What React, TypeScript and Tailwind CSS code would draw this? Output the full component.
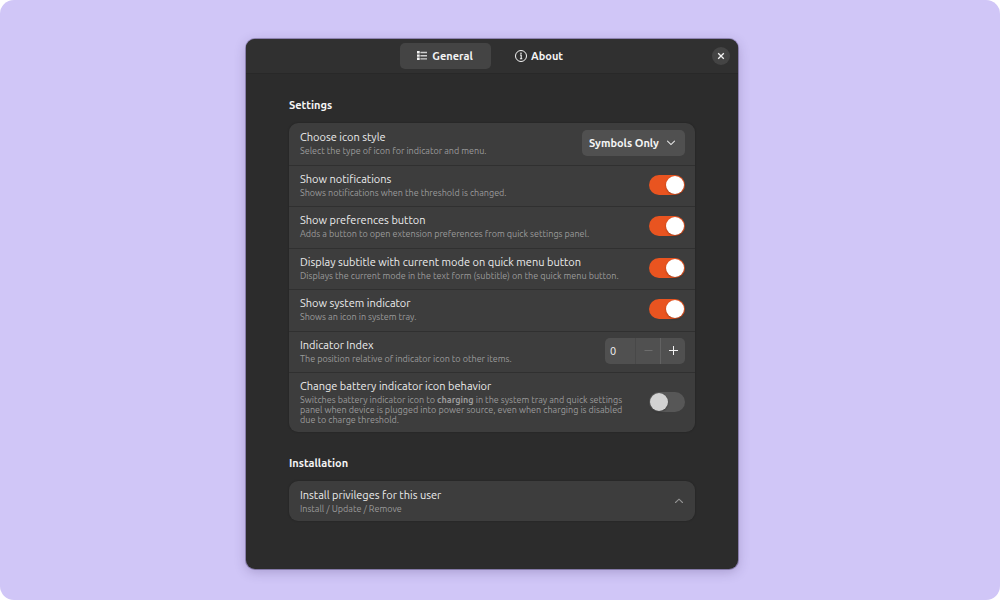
import { useState } from "react";
import type { ReactNode } from "react";

const focusRing = "outline-none focus-visible:ring-2 focus-visible:ring-[#e95420]";

function ListIcon() {
  return (
    <svg viewBox="0 0 10 10" className="size-[10px]" fill="currentColor" aria-hidden="true">
      <path d="M0 0h2.7v2.6H0zM0 3.4h2.7v2.4H0zM0 6.6h2.7v2.4H0z" />
      <path d="M3.4 0.8h6.6v1.4H3.4zM3.4 4h6.6v1.4H3.4zM3.4 7.2h6.6v1.4H3.4z" opacity="0.8" />
    </svg>
  );
}

function InfoIcon() {
  return (
    <svg viewBox="0 0 12 12" className="size-3" fill="none" stroke="currentColor" aria-hidden="true">
      <circle cx="6" cy="6" r="5.5" />
      <path d="M5 5h1.2v3.5M4.9 8.8h2.4" strokeWidth="1.1" />
      <circle cx="6" cy="3.2" r="0.8" fill="currentColor" stroke="none" />
    </svg>
  );
}

function Chevron({ up = false }: { up?: boolean }) {
  return (
    <svg viewBox="0 0 10 6" className="h-[6px] w-[10px]" fill="none" stroke="currentColor" strokeWidth="1.1" strokeLinecap="round" aria-hidden="true">
      <path d={up ? "M1.5 4.5L5 1.2l3.5 3.3" : "M1.5 1.2L5 4.6l3.5-3.4"} />
    </svg>
  );
}

function Row({ id, title, subtitle, children }: { id: string; title: string; subtitle: ReactNode; children: ReactNode }) {
  return (
    <li className="flex items-center justify-between gap-3 border-t border-[#303030] pr-[10px] pb-[2px] pl-[11px] first:border-t-0">
      <div className="min-w-0">
        <label htmlFor={id} className="block text-[11px] leading-[15px] text-[#ececec]">
          {title}
        </label>
        <p className="pt-px text-[9px] leading-[10px] text-[#9a9a9a]">{subtitle}</p>
      </div>
      <div className="shrink-0">{children}</div>
    </li>
  );
}

function Switch({ id, on = false }: { id: string; on?: boolean }) {
  return (
    <input
      id={id}
      type="checkbox"
      role="switch"
      defaultChecked={on}
      className={`block h-5 w-9 appearance-none rounded-full bg-[#575757] p-px before:block before:size-[18px] before:rounded-full before:bg-[#d2d2d2] before:shadow-[0_1px_2px_rgba(0,0,0,0.3)] checked:bg-[#e95420] checked:pl-[17px] checked:before:bg-white ${focusRing}`}
    />
  );
}

function Spinner({ id }: { id: string }) {
  const [value, setValue] = useState(0);
  return (
    <div className="flex h-[26px] w-20 overflow-hidden rounded-[5px] bg-[#505050] text-[#f2f2f2]">
      <input
        id={id}
        inputMode="numeric"
        value={value}
        onChange={(e) => setValue(Math.max(0, Number(e.target.value) || 0))}
        className="min-w-0 flex-1 bg-transparent pl-[5px] text-[11px] outline-none"
      />
      <button
        type="button"
        aria-label="Decrease"
        disabled={value === 0}
        onClick={() => setValue(value - 1)}
        className="flex w-[25px] items-center justify-center border-l border-[#484848] disabled:text-[#6d6d6d]"
      >
        <svg viewBox="0 0 9 9" className="size-[9px]" stroke="currentColor" aria-hidden="true">
          <path d="M0.5 4.5h8" />
        </svg>
      </button>
      <button
        type="button"
        aria-label="Increase"
        onClick={() => setValue(value + 1)}
        className="flex w-[25px] items-center justify-center border-l border-[#626262]"
      >
        <svg viewBox="0 0 9 9" className="size-[9px]" stroke="currentColor" aria-hidden="true">
          <path d="M0 4.5h9M4.5 0v9" />
        </svg>
      </button>
    </div>
  );
}

export default function App() {
  const [open, setOpen] = useState(false);
  return (
    <div className="min-h-screen bg-white font-['Ubuntu','Noto_Sans',sans-serif]">
      <div className="flex min-h-screen items-start justify-center rounded-[14px] bg-[#d0c6f7] pt-[39px] pr-4 pb-[31px]">
        <main className="w-full max-w-[492px] overflow-hidden rounded-[9px] bg-[#2c2c2c] pb-12 text-[#f4f4f4] shadow-[0_0_0_1px_rgba(40,30,70,0.35),0_3px_12px_rgba(50,35,90,0.25)]">
          <header className="grid grid-cols-[1fr_auto_1fr] items-center border-b border-[#282828] bg-[#303030] px-2 py-1">
            <nav className="col-start-2 flex gap-[3px] text-[11px] font-bold">
              <button type="button" className={`flex h-[26px] w-[91px] items-center justify-center gap-[5px] rounded-[5px] bg-[#444444] ${focusRing}`}>
                <ListIcon />
                General
              </button>
              <button type="button" className={`flex h-[26px] w-[91px] items-center justify-center gap-1 rounded-[5px] ${focusRing}`}>
                <InfoIcon />
                About
              </button>
            </nav>
            <button type="button" aria-label="Close" className={`flex size-[18px] items-center justify-center justify-self-end rounded-full bg-[#444444] ${focusRing}`}>
              <svg viewBox="0 0 8 8" className="size-2" stroke="currentColor" strokeWidth="1.3" aria-hidden="true">
                <path d="M1.2 1.2l5.6 5.6M6.8 1.2L1.2 6.8" />
              </svg>
            </button>
          </header>

          <div className="px-[43px] pt-[23px]">
            <h2 className="text-[11px] leading-4 font-bold">Settings</h2>
            <ul className="mt-[10px] grid min-h-[309px] grid-rows-[repeat(6,minmax(41px,1fr))_60px] rounded-[9px] bg-[#3d3d3d] shadow-[0_0_2px_rgba(0,0,0,0.3)]">
              <Row id="style" title="Choose icon style" subtitle="Select the type of icon for indicator and menu.">
                <div className="relative">
                  <select id="style" className={`block h-[26px] w-[103px] appearance-none rounded-[5px] bg-[#505050] pl-[7px] text-[11px] font-bold ${focusRing}`}>
                    <option>Symbols Only</option>
                    <option>Symbols and Text</option>
                  </select>
                  <span className="pointer-events-none absolute inset-y-0 right-[9px] flex items-center text-[#e4e4e4]">
                    <Chevron />
                  </span>
                </div>
              </Row>
              <Row id="notifications" title="Show notifications" subtitle="Shows notifications when the threshold is changed.">
                <Switch id="notifications" on />
              </Row>
              <Row id="preferences" title="Show preferences button" subtitle="Adds a button to open extension preferences from quick settings panel.">
                <Switch id="preferences" on />
              </Row>
              <Row id="subtitle" title="Display subtitle with current mode on quick menu button" subtitle="Displays the current mode in the text form (subtitle) on the quick menu button.">
                <Switch id="subtitle" on />
              </Row>
              <Row id="indicator" title="Show system indicator" subtitle="Shows an icon in system tray.">
                <Switch id="indicator" on />
              </Row>
              <Row id="index" title="Indicator Index" subtitle="The position relative of indicator icon to other items.">
                <Spinner id="index" />
              </Row>
              <Row
                id="battery"
                title="Change battery indicator icon behavior"
                subtitle={
                  <>
                    Switches battery indicator icon to <b>charging</b> in the system tray and quick settings panel when device is plugged into power source, even when charging is disabled due to charge threshold.
                  </>
                }
              >
                <Switch id="battery" />
              </Row>
            </ul>

            <h2 className="mt-[23px] text-[11px] leading-4 font-bold">Installation</h2>
            <button
              type="button"
              aria-expanded={open}
              onClick={() => setOpen(!open)}
              className={`mt-[10px] flex min-h-10 w-full items-center justify-between rounded-[9px] bg-[#3d3d3d] px-[11px] text-left shadow-[0_0_2px_rgba(0,0,0,0.3)] ${focusRing}`}
            >
              <span>
                <span className="block text-[11px] leading-[15px] text-[#ececec]">Install privileges for this user</span>
                <span className="block pt-px text-[9px] leading-[10px] text-[#9a9a9a]">Install / Update / Remove</span>
              </span>
              <span className="text-[#949494]">
                <Chevron up={!open} />
              </span>
            </button>
          </div>
        </main>
      </div>
    </div>
  );
}
